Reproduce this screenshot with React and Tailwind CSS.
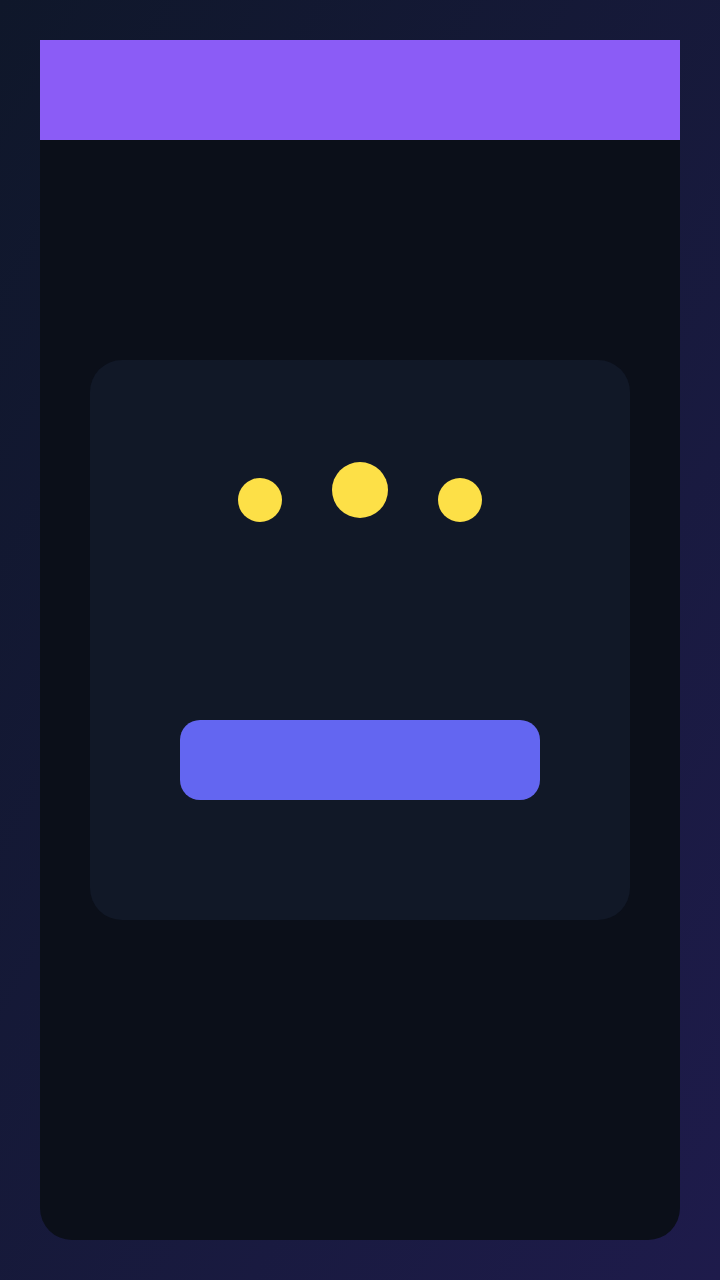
export default function App() {
  return (
    <div className="min-h-[1280px] w-[720px] bg-gradient-to-br from-[#0f172a] to-[#1e1b4b] p-10">
      <div className="flex h-[1200px] flex-col overflow-hidden rounded-b-[32px] bg-[#0b0f19]">
        <div className="h-[100px] bg-[#8b5cf6]" />
        <div className="flex flex-1 flex-col items-center pt-[220px]">
          <div className="flex h-[560px] w-[540px] flex-col items-center rounded-[32px] bg-[#111827]">
            <div className="mt-[112px] flex items-center gap-[50px]">
              <div className="h-[44px] w-[44px] rounded-full bg-[#fde047]" />
              <div className="h-[56px] w-[56px] -translate-y-[10px] rounded-full bg-[#fde047]" />
              <div className="h-[44px] w-[44px] rounded-full bg-[#fde047]" />
            </div>
            <div className="mt-[192px] h-[80px] w-[360px] rounded-[20px] bg-[#6366f1]" />
          </div>
        </div>
      </div>
    </div>
  );
}
